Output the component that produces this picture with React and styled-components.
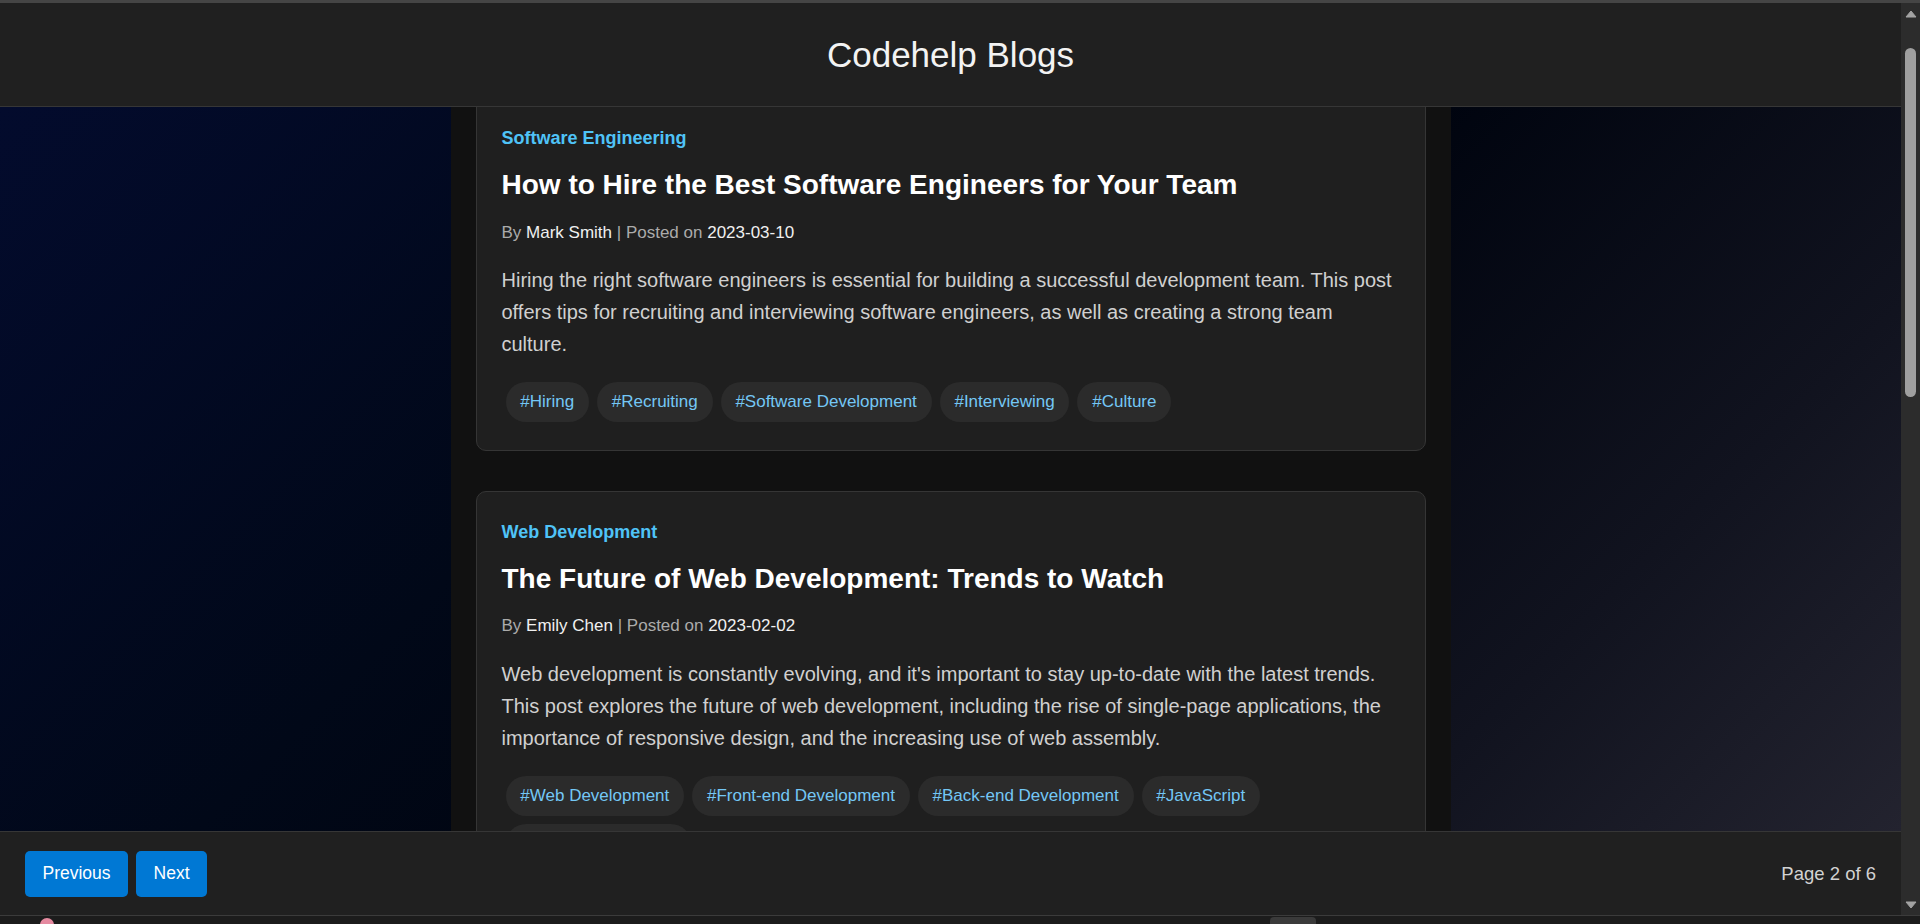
import React from "react"
import styled, { createGlobalStyle } from "styled-components"

const GlobalStyle = createGlobalStyle`
  * {
    box-sizing: border-box;
  }
  html,
  body {
    margin: 0;
    height: 100%;
    overflow: hidden;
    background: #1c1c1c;
  }
  body {
    font-family: "Liberation Sans", Arial, sans-serif;
  }
`

const posts = [
  {
    id: 1,
    category: "Software Engineering",
    title: "How to Hire the Best Software Engineers for Your Team",
    author: "Mark Smith",
    date: "2023-03-10",
    content:
      "Hiring the right software engineers is essential for building a successful development team. This post offers tips for recruiting and interviewing software engineers, as well as creating a strong team culture.",
    tags: ["Hiring", "Recruiting", "Software Development", "Interviewing", "Culture"],
  },
  {
    id: 2,
    category: "Web Development",
    title: "The Future of Web Development: Trends to Watch",
    author: "Emily Chen",
    date: "2023-02-02",
    content:
      "Web development is constantly evolving, and it's important to stay up-to-date with the latest trends. This post explores the future of web development, including the rise of single-page applications, the importance of responsive design, and the increasing use of web assembly.",
    tags: [
      "Web Development",
      "Front-end Development",
      "Back-end Development",
      "JavaScript",
      "Responsive Design",
    ],
  },
]

const Screen = styled.div`
  height: 924px;
  display: flex;
  flex-direction: column;
`

const WindowEdge = styled.div`
  height: 3px;
  flex-shrink: 0;
  background: #454545;
`

const Viewport = styled.div`
  flex: 1;
  min-height: 0;
  display: flex;
`

const Page = styled.div`
  flex: 1;
  min-width: 0;
  display: flex;
  flex-direction: column;
`

const Header = styled.header`
  height: 104px;
  flex-shrink: 0;
  display: flex;
  align-items: center;
  justify-content: center;
  background: #202020;
  border-bottom: 1px solid #363636;
`

const SiteTitle = styled.h1`
  margin: 0;
  font-size: 35px;
  font-weight: 400;
  color: #f3f3f3;
`

const Content = styled.main`
  flex: 1;
  min-height: 0;
  overflow: hidden;
  display: flex;
  justify-content: center;
  background: linear-gradient(
    135deg,
    #030b2d 0%,
    #010818 35%,
    #00040f 55%,
    #11131f 80%,
    #23232f 100%
  );
`

const Column = styled.div`
  width: 1000px;
  padding: 0 25px;
  background: #111111;
`

// how far the list is scrolled under the header
const Feed = styled.div`
  margin-top: ${props => props.offset}px;
`

const Card = styled.article`
  background: #1f1f1f;
  border: 1px solid #353535;
  border-radius: 10px;
  padding: 26px 25px 24px;
  margin-bottom: 40px;
  line-height: 1.6;
`

const Category = styled.div`
  font-size: 18px;
  font-weight: 700;
  color: #4fc3f7;
  margin-bottom: 10px;
`

const PostTitle = styled.h2`
  margin: 0 0 11px;
  font-size: 28px;
  font-weight: 700;
  line-height: 1.6;
  color: #ffffff;
`

const Meta = styled.p`
  margin: 0 0 18px;
  font-size: 17px;
  color: #ababab;

  & > strong {
    font-weight: 400;
    color: #f0f0f0;
  }
`

const Description = styled.p`
  margin: 0 0 18px;
  font-size: 20px;
  color: #d0d0d0;
`

const TagList = styled.div`
  display: flex;
  flex-wrap: wrap;
`

const Tag = styled.span`
  margin: 4px;
  padding: 10px 14.8px;
  font-size: 17px;
  line-height: 20px;
  color: #74c7f5;
  background: #2b2b2b;
  border-radius: 20px;
`

const Footer = styled.footer`
  height: 84px;
  flex-shrink: 0;
  display: flex;
  align-items: center;
  justify-content: space-between;
  padding: 0 25px;
  background: #202020;
  border-top: 1px solid #363636;
`

const ButtonGroup = styled.div`
  display: flex;
  gap: 8px;
`

const PageButton = styled.button`
  height: 46px;
  padding: 0 17.5px;
  border: none;
  border-radius: 5px;
  background: #0078d4;
  color: #ffffff;
  font-family: inherit;
  font-size: 17.5px;
  cursor: pointer;
`

const PageInfo = styled.span`
  font-size: 18.5px;
  color: #d2d2d2;
`

const ScrollTrack = styled.div`
  width: 19px;
  flex-shrink: 0;
  display: flex;
  flex-direction: column;
  align-items: center;
  padding: 6px 0;
  background: #2c2c2c;
`

const ArrowBox = styled.div`
  height: 9px;
  display: flex;
  align-items: center;
  justify-content: center;
`

const Thumb = styled.div`
  width: 11px;
  border-radius: 6px;
  background: #9f9f9f;
`

const Spacer = styled.div`
  flex: 1;
`

const Taskbar = styled.div`
  height: 9px;
  flex-shrink: 0;
  display: flex;
  align-items: flex-start;
  padding-left: 40px;
  background: #1c1c1c;
  border-top: 1px solid #3b3b3b;
  overflow: hidden;
`

const TrayDot = styled.div`
  width: 14px;
  height: 14px;
  margin-top: 2px;
  border-radius: 50%;
  background: #e58aa0;
`

const TrayTab = styled.div`
  width: 46px;
  height: 14px;
  margin-left: 1216px;
  margin-top: 1px;
  border-radius: 4px 4px 0 0;
  background: #3a3a3a;
`

const Arrow = ({ down }) => (
  <ArrowBox>
    <svg width="12" height="8" viewBox="0 0 12 8">
      <path
        d={down ? "M1 1 L11 1 L6 7 Z" : "M1 7 L11 7 L6 1 Z"}
        fill="#a3a3a3"
        stroke="#a3a3a3"
        strokeLinejoin="round"
      />
    </svg>
  </ArrowBox>
)

const BlogCard = ({ post }) => (
  <Card>
    <Category>{post.category}</Category>
    <PostTitle>{post.title}</PostTitle>
    <Meta>
      By <strong>{post.author}</strong> | Posted on <strong>{post.date}</strong>
    </Meta>
    <Description>{post.content}</Description>
    <TagList>
      {post.tags.map(tag => (
        <Tag key={tag}>#{tag}</Tag>
      ))}
    </TagList>
  </Card>
)

export default function App() {
  return (
    <Screen>
      <GlobalStyle />
      <WindowEdge />
      <Viewport>
        <Page>
          <Header>
            <SiteTitle>Codehelp Blogs</SiteTitle>
          </Header>
          <Content>
            <Column>
              <Feed offset={-10}>
                {posts.map(post => (
                  <BlogCard key={post.id} post={post} />
                ))}
              </Feed>
            </Column>
          </Content>
          <Footer>
            <ButtonGroup>
              <PageButton>Previous</PageButton>
              <PageButton>Next</PageButton>
            </ButtonGroup>
            <PageInfo>Page 2 of 6</PageInfo>
          </Footer>
        </Page>
        <ScrollTrack>
          <Arrow />
          <Thumb style={{ height: 349, marginTop: 30 }} />
          <Spacer />
          <Arrow down />
        </ScrollTrack>
      </Viewport>
      <Taskbar>
        <TrayDot />
        <TrayTab />
      </Taskbar>
    </Screen>
  )
}
